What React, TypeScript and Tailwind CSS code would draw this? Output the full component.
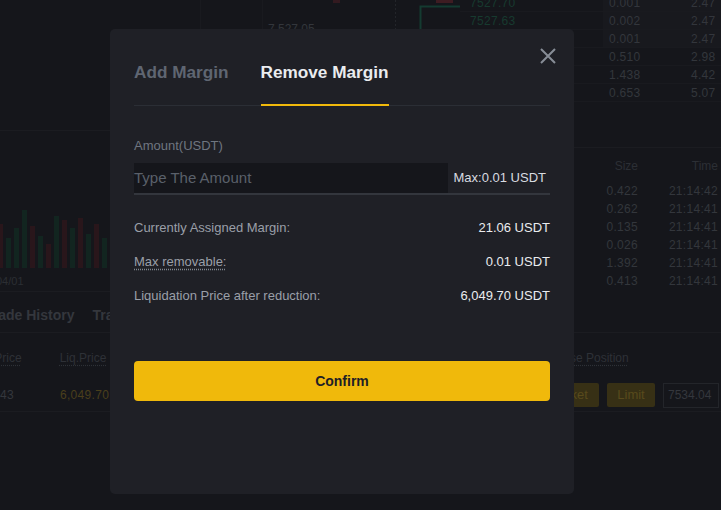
import type { ReactNode } from 'react';

const book = [
  { price: '7527.70', size: '0.001', total: '2.47', depth: true },
  { price: '7527.63', size: '0.002', total: '2.47', depth: true },
  { price: '7527.60', size: '0.001', total: '2.47', depth: true },
  { price: '7527.55', size: '0.510', total: '2.98', depth: false },
  { price: '7527.50', size: '1.438', total: '4.42', depth: false },
  { price: '7527.41', size: '0.653', total: '5.07', depth: false },
];

const trades = [
  { size: '0.422', time: '21:14:42' },
  { size: '0.262', time: '21:14:41' },
  { size: '0.135', time: '21:14:41' },
  { size: '0.026', time: '21:14:41' },
  { size: '1.392', time: '21:14:41' },
  { size: '0.413', time: '21:14:41' },
];

const volumes = [
  { h: 44, up: false },
  { h: 30, up: true },
  { h: 40, up: true },
  { h: 58, up: true },
  { h: 42, up: false },
  { h: 32, up: true },
  { h: 24, up: false },
  { h: 52, up: true },
  { h: 48, up: false },
  { h: 40, up: true },
  { h: 50, up: false },
  { h: 34, up: true },
  { h: 44, up: false },
  { h: 30, up: true },
];

const Row = ({ label, value }: { label: ReactNode; value: string }) => (
  <div className="flex h-[20px] items-center justify-between text-[13px]">
    <span className="text-[#9a9fa8]">{label}</span>
    <span className="font-medium text-[#eaecef]">{value}</span>
  </div>
);

const MarginModal = () => (
  <div className="absolute left-[110px] top-[29px] flex h-[465px] w-[464px] flex-col rounded-[5px] bg-[#1f2026] px-6">
    <button className="absolute right-[18px] top-[19px] text-[#878d96]">
      <svg width="16" height="16" viewBox="0 0 16 16" fill="none">
        <path d="M1 1 15 15M15 1 1 15" stroke="currentColor" strokeWidth="2" />
      </svg>
    </button>

    <div className="mt-[29px] flex gap-[32px] border-b border-[#2b2e35]">
      <div className="pb-[19px] text-[17.2px] font-bold leading-[28px] text-[#5f6672]">Add Margin</div>
      <div className="-mb-px border-b-2 border-[#f0b90b] pb-[18px] text-[17.2px] font-bold leading-[28px] text-[#eaecef]">
        Remove Margin
      </div>
    </div>

    <div className="mt-[31px] text-[13px] leading-[18px] text-[#6f7680]">Amount(USDT)</div>
    <div className="mt-[8px] flex h-[32px] items-start border-b-2 border-[#33363d]">
      <div className="flex h-[30px] w-[314px] items-center bg-[#15161b] text-[15px] text-[#5a606a]">
        Type The Amount
      </div>
      <div className="flex h-[30px] flex-1 items-center justify-end pr-[4px] text-[13px] text-[#d8dbe0]">
        Max:0.01 USDT
      </div>
    </div>

    <div className="mt-[23px] flex flex-col gap-[14px]">
      <Row label="Currently Assigned Margin:" value="21.06 USDT" />
      <Row
        label={
          <span className="underline decoration-[#80868f] decoration-dotted underline-offset-[3px]">
            Max removable:
          </span>
        }
        value="0.01 USDT"
      />
      <Row label="Liquidation Price after reduction:" value="6,049.70 USDT" />
    </div>

    <button className="mt-[55px] h-[40px] w-full rounded-[4px] bg-[#f0b90b] text-[14px] font-bold text-[#1e2026]">
      Confirm
    </button>
  </div>
);

export default function App() {
  return (
    <div className="relative h-[510px] w-[721px] overflow-hidden bg-[#15161b] font-['Liberation_Sans',sans-serif]">
      <div className="flex">
        <div className="relative h-[292px] w-[460px] border-b border-[#1b1c21]">
          <svg className="absolute inset-0" width="460" height="292">
            <line x1="0" y1="130.5" x2="460" y2="130.5" stroke="#1b1c21" />
            <line x1="200.5" y1="0" x2="200.5" y2="130" stroke="#191a1f" />
            <line x1="262.5" y1="0" x2="262.5" y2="130" stroke="#191a1f" />
            <line x1="395.5" y1="0" x2="395.5" y2="30" stroke="#23252a" strokeDasharray="2 2" />
            <rect x="333" y="0" width="7" height="3" fill="#331a20" />
            <rect x="436" y="0" width="17" height="3" fill="#3e1c22" />
            <path d="M420.5 30V6.5H460" stroke="#143b31" strokeWidth="2" fill="none" />
            {volumes.map((v, i) => (
              <rect
                key={i}
                x={i * 8 - 2}
                y={268 - v.h}
                width="5"
                height={v.h}
                fill={v.up ? '#122520' : '#29161b'}
              />
            ))}
          </svg>
          <div className="absolute left-[268px] top-[20px] text-[12px] text-[#33363c]">7,527.05</div>
          <div className="absolute -left-[4px] top-[273px] text-[11px] text-[#2b2e33]">04/01</div>
        </div>

        <div className="w-[261px]">
          <div className="-mt-[6px] h-[154px] border-b border-[#1b1c21]">
            {book.map((r) => (
              <div key={r.size + r.total} className="flex h-[18px] items-center border-b border-[#191a1f] text-[12px] tracking-wide text-[#33363c]">
                <span className={`w-[143px] pl-[10px] ${r.depth ? 'text-[#173a2f]' : 'text-[#33363c]'}`}>{r.price}</span>
                <div className={`flex h-full flex-1 items-center ${r.depth ? 'bg-[#18191e]' : ''}`}>
                  <span className="w-[88px] pl-[6px]">{r.size}</span>
                  <span>{r.total}</span>
                </div>
              </div>
            ))}
          </div>
          <div className="flex h-[27px] items-end text-[12px] text-[#2c2f35]">
            <span className="w-[178px] text-right">Size</span>
            <span className="flex-1 pr-[3px] text-right">Time</span>
          </div>
          <div className="mt-[7px] flex flex-col">
            {trades.map((t, i) => (
              <div key={i} className="flex h-[18px] items-center text-[12px] tracking-wide text-[#33363c]">
                <span className="w-[178px] text-right">{t.size}</span>
                <span className="flex-1 pr-[3px] text-right">{t.time}</span>
              </div>
            ))}
          </div>
        </div>
      </div>

      <div className="flex h-[41px] items-center gap-[18px] border-b border-[#1b1c21]">
        <span className="-ml-[15px] whitespace-nowrap pt-[6px] text-[14px] font-bold text-[#34373d]">Trade History</span>
        <span className="whitespace-nowrap pt-[6px] text-[14px] font-bold text-[#34373d]">Transaction History</span>
      </div>

      <div className="flex h-[79px] border-b border-[#1b1c21]">
        <div className="flex flex-col">
          <div className="flex h-[50px] items-center gap-[38px] text-[12px] text-[#2e3137]">
            <span className="-ml-[37px] whitespace-nowrap underline decoration-dotted underline-offset-[3px]">Entry Price</span>
            <span className="whitespace-nowrap underline decoration-dotted underline-offset-[3px]">Liq.Price</span>
          </div>
          <div className="flex h-[24px] items-center gap-[18px] text-[12px] tracking-wide">
            <span className="-ml-[20px] w-[34px] text-right text-[#34373d]">7,543</span>
            <span className="pl-[28px] text-[#4a3f1b]">6,049.70</span>
          </div>
        </div>
        <div className="ml-auto flex w-[181px] flex-col">
          <div className="flex h-[50px] items-center pl-[12px] text-[12px] text-[#2e3137]">
            <span className="whitespace-nowrap underline decoration-dotted underline-offset-[3px]">Close Position</span>
          </div>
          <div className="flex h-[24px] items-center gap-[8px] text-[13px]">
            <span className="-ml-[3px] flex h-[24px] w-[62px] items-center justify-center rounded-[2px] bg-[#373015] text-[#584a1c]">
              Market
            </span>
            <span className="flex h-[24px] w-[48px] items-center justify-center rounded-[2px] bg-[#373015] text-[#584a1c]">
              Limit
            </span>
            <span className="flex h-[25px] w-[56px] items-center border border-[#23252a] pl-[4px] text-[12px] text-[#34373d]">
              7534.04
            </span>
          </div>
        </div>
      </div>

      <MarginModal />
    </div>
  );
}
